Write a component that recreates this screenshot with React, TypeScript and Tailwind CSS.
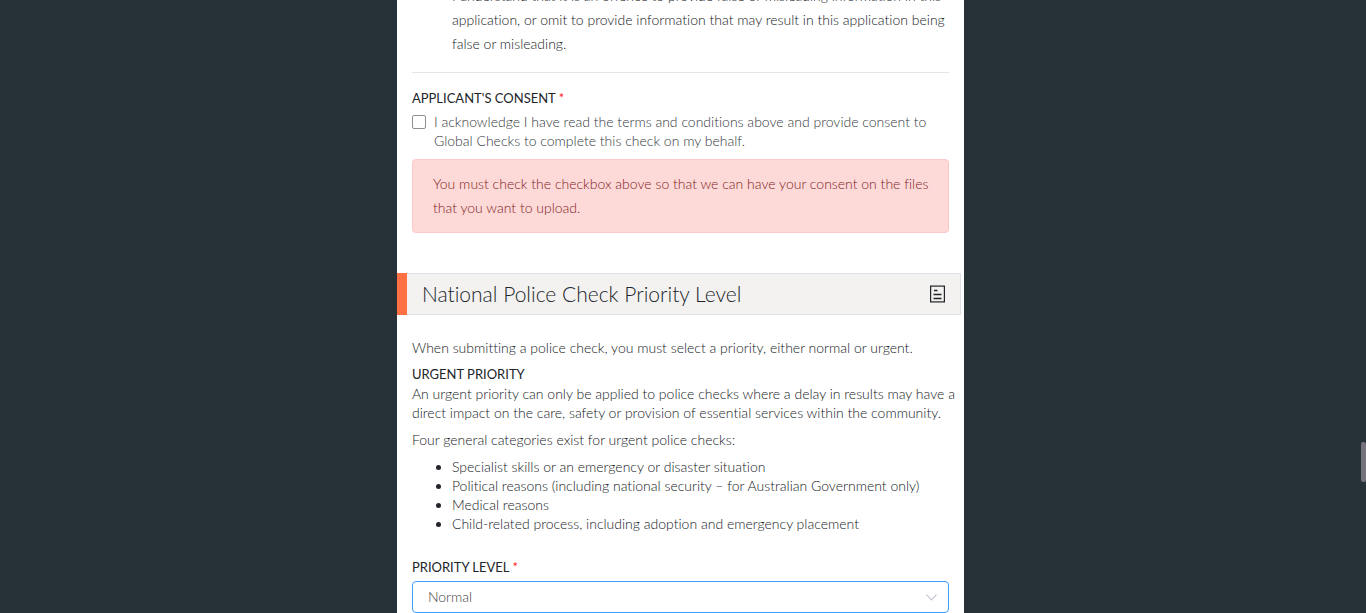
import React from "react";

const categories = [
  "Specialist skills or an emergency or disaster situation",
  "Political reasons (including national security – for Australian Government only)",
  "Medical reasons",
  "Child-related process, including adoption and emergency placement",
];

function Required() {
  return <span className="text-[#ff1f1f]"> *</span>;
}

function SectionHeader({ title }: { title: string }) {
  return (
    <header className="mr-[3px] flex h-[42px] bg-[#f3f2f1]">
      <div className="w-[10px] shrink-0 bg-[#ff7043]" />
      <div className="flex flex-1 items-center justify-between border border-l-0 border-[#dee2e6] px-[15px]">
        <h2 className="text-[21px] leading-6 font-light text-[#212529]">{title}</h2>
        <svg width="15" height="18" viewBox="0 0 15 18" fill="none" stroke="#212529" aria-hidden="true">
          <rect x="0.6" y="1.1" width="13.8" height="15.8" strokeWidth="1.2" />
          <path d="M4 5.5h3.5M3.5 9.5h8M3.5 13.5h8" strokeWidth="1.3" />
        </svg>
      </div>
    </header>
  );
}

export default function App() {
  return (
    <div className="flex h-screen overflow-hidden bg-[#263238] font-['Lato','Open_Sans',sans-serif] text-[14px] leading-[19px] font-light text-[#15191d] [font-variant-ligatures:none]">
      <div className="flex min-w-0 flex-1 justify-center">
        <main className="w-5/12 min-w-[567px] bg-white whitespace-nowrap">
          <section className="px-[15px]">
            <p className="-mt-4 pl-10 leading-6">
              I understand that it is an offence to provide false or misleading information in this
              <br />
              application, or omit to provide information that may result in this application being
              <br />
              false or misleading.
            </p>
            <hr className="my-4 border-[#e4e4e5]" />
            <h3 className="text-[13px] leading-[19px] font-normal text-[#212529]">
              APPLICANT'S CONSENT
              <Required />
            </h3>
            <label className="mt-1 flex gap-2 text-[#34383c]">
              <input
                type="checkbox"
                className="mt-[3px] size-[14px] shrink-0 appearance-none rounded-[2px] border border-[#8f8f8f] bg-white checked:bg-[#409eff]"
              />
              <span>
                I acknowledge I have read the terms and conditions above and provide consent to
                <br />
                Global Checks to complete this check on my behalf.
              </span>
            </label>
            <div role="alert" className="mt-[9px] rounded-[4px] border border-[#fcc9c8] bg-[#fdd9d7] px-5 py-3 leading-6 text-[#7f231f]">
              You must check the checkbox above so that we can have your consent on the files
              <br />
              that you want to upload.
            </div>
          </section>

          <section className="mt-10">
            <SectionHeader title="National Police Check Priority Level" />
            <div className="px-[15px] pt-[23px]">
              <p className="mb-2">
                When submitting a police check, you must select a priority, either normal or urgent.
              </p>
              <h3 className="text-[13px] leading-[19px] font-normal text-[#212529]">URGENT PRIORITY</h3>
              <p className="mb-2">
                An urgent priority can only be applied to police checks where a delay in results may have a
                <br />
                direct impact on the care, safety or provision of essential services within the community.
              </p>
              <p className="mb-2">Four general categories exist for urgent police checks:</p>
              <ul className="mb-[25px] list-disc pl-10 marker:text-[#212529]">
                {categories.map((item) => (
                  <li key={item}>{item}</li>
                ))}
              </ul>
              <label htmlFor="priority" className="mb-1 block text-[13px] leading-[19px] font-normal text-[#212529]">
                PRIORITY LEVEL
                <Required />
              </label>
              <div className="grid items-center">
                <select
                  id="priority"
                  defaultValue="Normal"
                  className="col-start-1 row-start-1 h-8 w-full appearance-none rounded-[4px] border border-[#409eff] bg-white px-[15px] pb-[2px] text-[#3c4044] outline-none"
                >
                  <option>Normal</option>
                  <option>Urgent</option>
                </select>
                <svg
                  className="pointer-events-none col-start-1 row-start-1 mr-3 justify-self-end"
                  width="11"
                  height="7"
                  viewBox="0 0 11 7"
                  fill="none"
                  stroke="#c0c4cc"
                  strokeWidth="1.1"
                  aria-hidden="true"
                >
                  <path d="M0.5 0.7l5 5.2 5-5.2" />
                </svg>
              </div>
            </div>
          </section>
        </main>
      </div>
      <div className="w-[5px] shrink-0 pt-[442px]" aria-hidden="true">
        <div className="h-10 rounded-[2px] bg-[#75747c]" />
      </div>
    </div>
  );
}
